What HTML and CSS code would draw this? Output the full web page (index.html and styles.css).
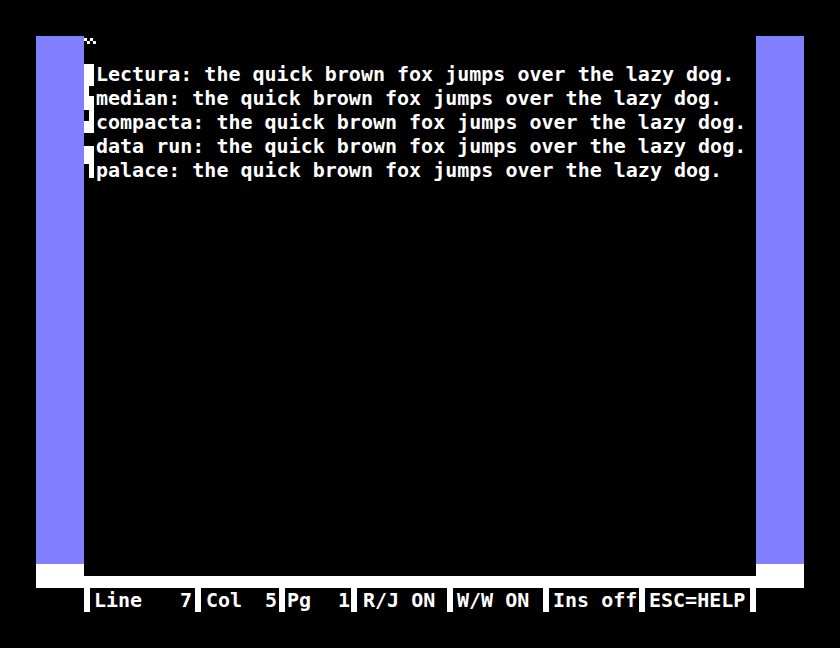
FILE: index.html
```html
<!DOCTYPE html>
<html>
<head>
<meta charset="utf-8">
<link rel="stylesheet" href="styles.css">
</head>
<body>
<div class="monitor">
  <div class="frame">
    <div class="border"></div>
    <div class="playfield">
      <div class="toprow">
        <svg class="tilde" width="12" height="6" viewBox="0 0 12 6"><path d="M0 0h3v3H0zM3 3h3v3H3zM6 0h3v3H6zM9 3h3v3H9z" fill="#fff"/></svg>
      </div>
      <div class="doc">
        <svg class="margin" width="12" height="120" viewBox="0 0 12 120">
          <g fill="#fff">
            <rect x="0" y="2" width="10" height="22"/>
            <rect x="0" y="24" width="5" height="10"/>
            <rect x="0" y="34" width="10" height="14"/>
            <rect x="5" y="48" width="5" height="11"/>
            <rect x="0" y="59" width="10" height="12"/>
            <rect x="0" y="84" width="10" height="18"/>
            <rect x="5" y="102" width="5" height="14"/>
          </g>
        </svg>
        <div class="lines">
          <div class="line">Lectura: the quick brown fox jumps over the lazy dog.</div>
          <div class="line">median: the quick brown fox jumps over the lazy dog.</div>
          <div class="line">compacta: the quick brown fox jumps over the lazy dog.</div>
          <div class="line">data run: the quick brown fox jumps over the lazy dog.</div>
          <div class="line">palace: the quick brown fox jumps over the lazy dog.</div>
        </div>
      </div>
    </div>
    <div class="border"></div>
  </div>
  <div class="band"></div>
  <div class="status">
    <span class="bar"></span>
    <span class="seg seg-line"><span>Line</span><span>7</span></span>
    <span class="bar"></span>
    <span class="seg seg-col"><span>Col</span><span>5</span></span>
    <span class="bar"></span>
    <span class="seg seg-pg"><span>Pg</span><span>1</span></span>
    <span class="bar"></span>
    <span class="seg seg-rj">R/J ON</span>
    <span class="bar"></span>
    <span class="seg seg-ww">W/W ON</span>
    <span class="bar"></span>
    <span class="seg seg-ins">Ins off</span>
    <span class="bar"></span>
    <span class="seg seg-esc">ESC=HELP</span>
    <span class="bar"></span>
  </div>
</div>
</body>
</html>
```

FILE: styles.css
```css
html, body {
  margin: 0;
  padding: 0;
  background: #000;
}

body {
  width: 840px;
  height: 648px;
  overflow: hidden;
  font-family: "DejaVu Sans Mono", "Liberation Mono", monospace;
  font-weight: bold;
  font-size: 20px;
  line-height: 24px;
  color: #fff;
}

.monitor {
  margin: 36px 0 0 36px;
  width: 768px;
}

.frame {
  display: flex;
  height: 540px;
}

.border {
  width: 48px;
  flex: none;
  background: linear-gradient(#8080ff 528px, #fff 528px);
}

.playfield {
  width: 672px;
  flex: none;
  background: #000;
}

.toprow {
  height: 24px;
}

.tilde {
  display: block;
  margin-top: 2px;
}

.doc {
  display: flex;
}

.margin {
  display: block;
  flex: none;
}

.lines {
  display: flex;
  flex-direction: column;
}

.line {
  height: 24px;
  white-space: pre;
}

.band {
  height: 12px;
  background: #fff;
}

.status {
  display: flex;
  margin-left: 48px;
  height: 24px;
  white-space: pre;
}

.bar {
  width: 6px;
  height: 24px;
  flex: none;
  background: #fff;
}

.seg {
  flex: none;
  display: flex;
  box-sizing: border-box;
}

.seg-line { width: 105px; padding: 0 3px 0 4px; justify-content: space-between; }
.seg-col  { width: 78px;  padding: 0 2px 0 5px; justify-content: space-between; }
.seg-pg   { width: 66px;  padding: 0 1px 0 2px; justify-content: space-between; }
.seg-rj   { width: 90px;  padding-left: 6px; }
.seg-ww   { width: 90px;  padding-left: 4px; }
.seg-ins  { width: 90px;  padding-left: 4px; }
.seg-esc  { width: 105px; padding-left: 4px; }
```
